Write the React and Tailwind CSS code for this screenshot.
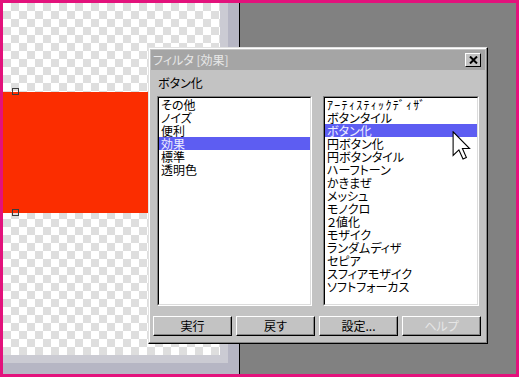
const leftItems = ['その他', 'ノイズ', '便利', '効果', '標準', '透明色']
const rightItems = [
  'ｱｰﾃｨｽﾃｨｯｸﾃﾞｨｻﾞ',
  'ボタンタイル',
  'ボタン化',
  '円ボタン化',
  '円ボタンタイル',
  'ハーフトーン',
  'かきまぜ',
  'メッシュ',
  'モノクロ',
  '２値化',
  'モザイク',
  'ランダムディザ',
  'セピア',
  'スフィアモザイク',
  'ソフトフォーカス',
]

export default function App() {
  return (
    <div className="relative w-[519px] h-[377px] overflow-hidden bg-[#e3127c] p-[3px] font-['Noto_Sans_CJK_JP',sans-serif] text-[12px] [font-feature-settings:'palt']">
      <div className="flex h-full">
        {/* キャンバス */}
        <div className="w-[236px] h-full border-r-[11px] border-b-[11px] border-[#b6b6c4]">
          <div className="h-full border-r-[8px] border-b-[8px] border-[#cbcbd3]">
            <div className="relative h-full [background:repeating-conic-gradient(#dedede_0_25%,#ffffff_0_50%)_0_0/16px_16px]">
              <div className="absolute left-0 top-[89px] w-[217px] h-[121px] bg-[#fb2d00]" />
              <div className="absolute left-[9px] top-[85px] w-[7px] h-[7px] border border-[#3c3c3c]" />
              <div className="absolute left-[9px] top-[206px] w-[7px] h-[7px] border border-[#3c3c3c]" />
            </div>
          </div>
        </div>
        <div className="w-[1px] bg-black" />
        <div className="flex-1 bg-[#818181]" />
      </div>

      {/* フィルタ ダイアログ */}
      <div className="absolute left-[148px] top-[47px] w-[340px] h-[297px] flex flex-col bg-[#c3c3c3] border border-t-[#e2e2e2] border-l-[#e2e2e2] border-b-black border-r-black p-[2px] shadow-[inset_-1px_-1px_#858585,inset_1px_1px_#ffffff]">
        <div className="h-[20px] flex items-center justify-between bg-[#a5a5a5] pl-[2px] pr-[4px] text-[#e8e8e8]">
          <span>フィルタ [効果]</span>
          <div className="w-[16px] h-[14px] flex items-center justify-center bg-[#c3c3c3] border border-t-white border-l-white border-b-black border-r-black">
            <svg width="9" height="8" viewBox="0 0 9 8">
              <path d="M1 0.5 L8 7.5 M8 0.5 L1 7.5" stroke="black" strokeWidth="2" />
            </svg>
          </div>
        </div>

        <div className="h-[26px] flex items-center pl-[7px] text-black">ボタン化</div>

        <div className="flex gap-[11px] px-[6px] h-[210px]">
          <ListBox items={leftItems} selected={3} width="w-[155px]" />
          <ListBox items={rightItems} selected={2} width="w-[156px]" />
        </div>

        <div className="mt-[10px] flex gap-[4px] px-[2px]">
          <Button label="実行" />
          <Button label="戻す" />
          <Button label="設定..." />
          <Button label="ヘルプ" disabled />
        </div>
      </div>

      {/* マウスカーソル */}
      <svg className="absolute left-[452px] top-[131px]" width="19" height="29" viewBox="0 0 12 19">
        <polygon
          points="0.5,0.5 0.5,16 4.3,12.4 7,18.4 9.2,17.4 6.6,11.5 11.3,11.5"
          fill="white"
          stroke="black"
          strokeWidth="0.7"
          strokeLinejoin="miter"
        />
      </svg>
    </div>
  )
}

function ListBox({ items, selected, width }) {
  return (
    <div className={`${width} h-full border border-t-[#808080] border-l-[#808080] border-b-white border-r-white`}>
      <div className="h-full bg-white border border-t-black border-l-black border-b-[#dcdcdc] border-r-[#dcdcdc] overflow-hidden">
        {items.map((item, i) => (
          <div
            key={i}
            className={
              (i === selected
                ? 'h-[13px] leading-[13px] px-[2px] whitespace-nowrap bg-[#5d5df2] text-[#eeeeff]'
                : 'h-[13px] leading-[13px] px-[2px] whitespace-nowrap text-black') +
              (/^[ｦ-ﾟ]/.test(item) ? ' tracking-[1.3px]' : '')
            }
          >
            {item}
          </div>
        ))}
      </div>
    </div>
  )
}

function Button({ label, disabled = false }) {
  return (
    <div
      className={`w-[79px] h-[20px] flex items-center justify-center bg-[#c3c3c3] border border-t-white border-l-white border-b-black border-r-black shadow-[inset_-1px_-1px_#858585] ${
        disabled ? 'text-[#e6e6e6]' : 'text-black'
      }`}
    >
      {label}
    </div>
  )
}
